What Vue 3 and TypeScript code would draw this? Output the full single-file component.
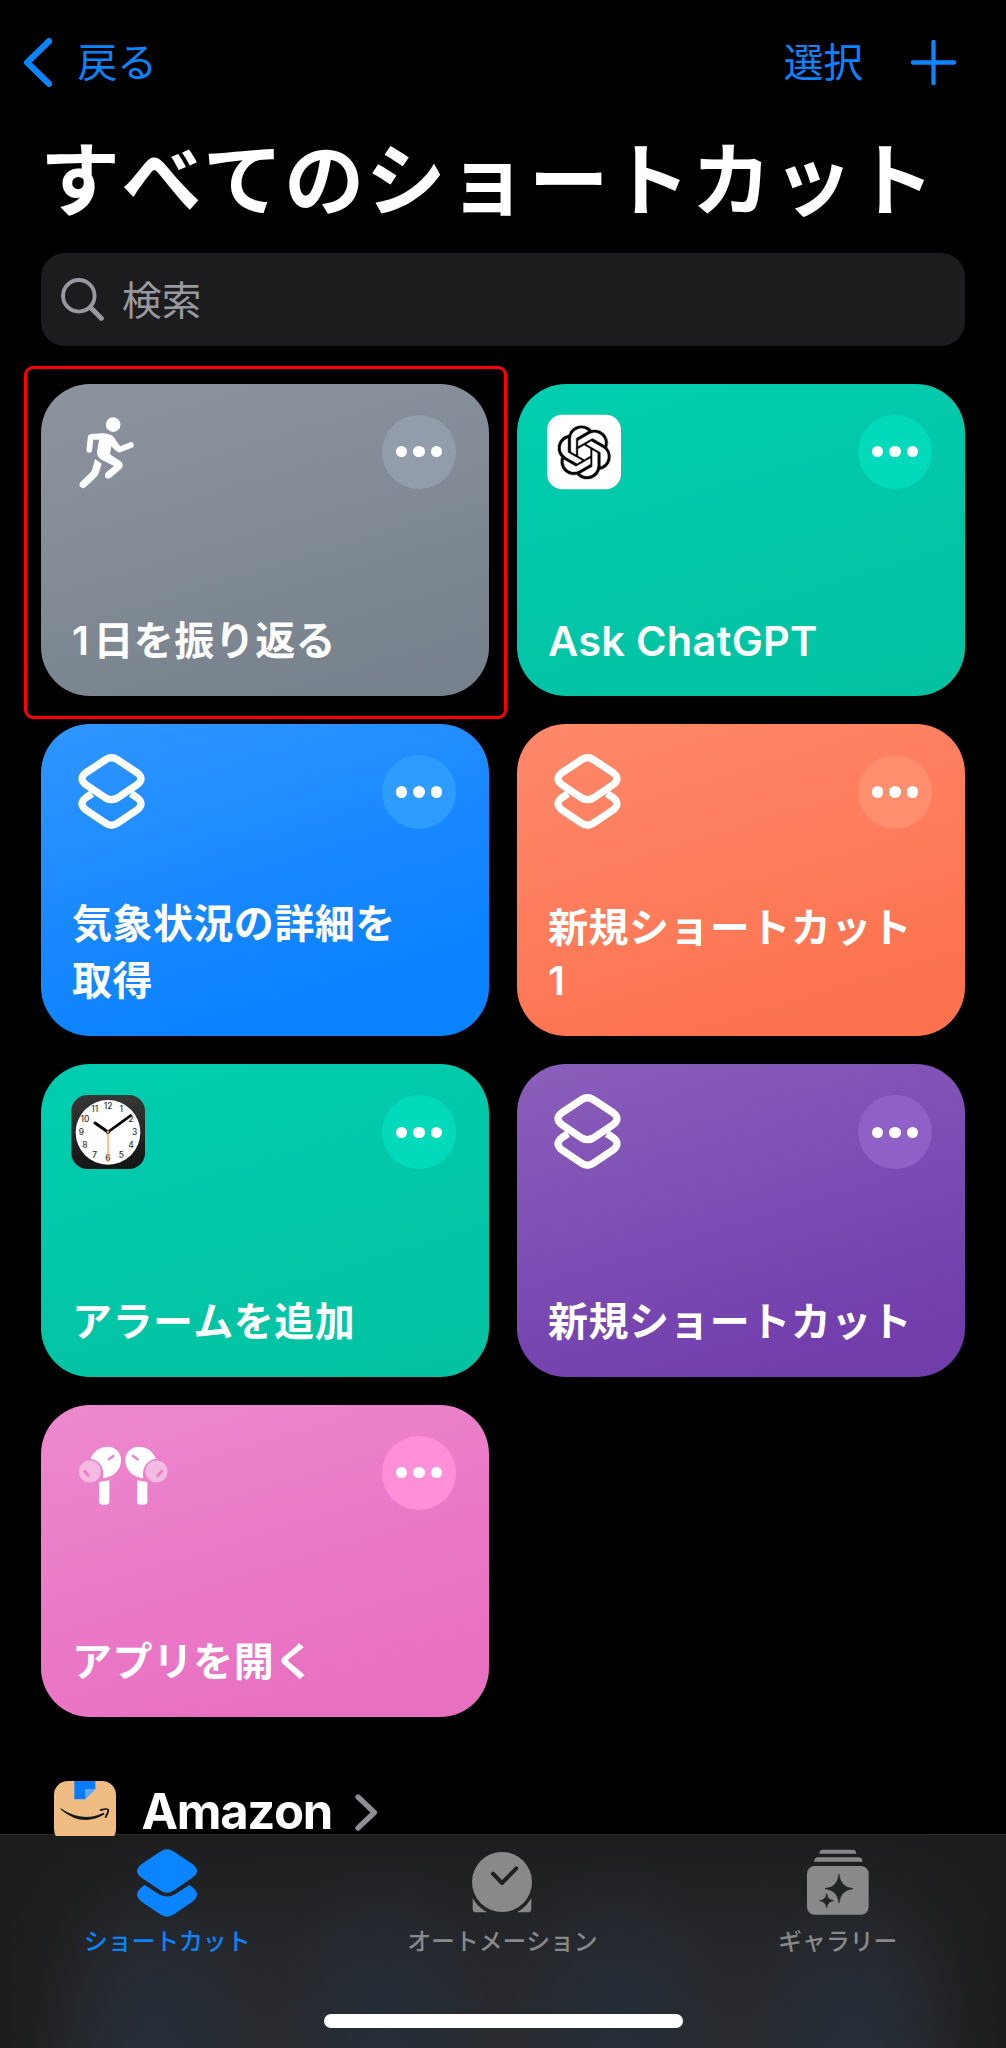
<script setup lang="ts">
type IconKind = 'runner' | 'chatgpt' | 'layers' | 'clock' | 'buds'

interface Shortcut {
  lines: string[]
  icon: IconKind
  tone: string
  variant?: string
}

const shortcuts: Shortcut[] = [
  { lines: ['1日を振り返る'], icon: 'runner', tone: 'gray', variant: 'highlighted' },
  { lines: ['Ask ChatGPT'], icon: 'chatgpt', tone: 'green', variant: 'latin' },
  { lines: ['気象状況の詳細を', '取得'], icon: 'layers', tone: 'blue' },
  { lines: ['新規ショートカット', '1'], icon: 'layers', tone: 'orange', variant: 'tight' },
  { lines: ['アラームを追加'], icon: 'clock', tone: 'green' },
  { lines: ['新規ショートカット'], icon: 'layers', tone: 'purple' },
  { lines: ['アプリを開く'], icon: 'buds', tone: 'pink' },
]

const numerals = Array.from({ length: 12 }, (_, i) => {
  const hour = i + 1
  const angle = (hour * Math.PI) / 6
  return {
    hour,
    x: 236 + Math.sin(angle) * 80,
    y: 231 - Math.cos(angle) * 79 + 9,
  }
})
</script>

<template>
  <div class="screen">
    <header class="nav">
      <button class="back">
        <svg class="chevron" viewBox="72 111 84 147" fill="none">
          <path d="M147 120.500L81.500 184.500L147 248.500" stroke="currentColor" stroke-width="19" stroke-linecap="round" stroke-linejoin="round" />
        </svg>
        <span>戻る</span>
      </button>
      <div class="actions">
        <button class="select">選択</button>
        <svg class="plus" viewBox="0 0 134 134">
          <path d="M67 6V128M6 67H128" stroke="currentColor" stroke-width="13" stroke-linecap="round" />
        </svg>
      </div>
    </header>

    <h1 class="title">すべてのショートカット</h1>

    <div class="search">
      <svg viewBox="183 833 128 128" fill="none">
        <circle cx="236" cy="886" r="47" stroke="currentColor" stroke-width="11.500" />
        <path d="M271 921L303 953" stroke="currentColor" stroke-width="15" stroke-linecap="round" />
      </svg>
      <span>検索</span>
    </div>

    <main class="grid">
      <article v-for="(item, i) in shortcuts" :key="i" class="card" :class="[item.tone, item.variant]">
        <div class="card-top">
          <svg v-if="item.icon === 'runner'" class="icon" viewBox="154 163 222 222">
            <g fill="none" stroke="#fff" stroke-linecap="round" stroke-linejoin="round">
              <path d="M209 268L213 229L250 228" stroke-width="17" />
              <path d="M276 239L299 267L334 253" stroke-width="17" />
            </g>
            <circle cx="280.500" cy="192" r="22" fill="#fff" />
            <path d="M213 220L250 218Q273 219 284 231L300 258L290 272L275 257L271 281L303 302Q315 313 304 325L273 351Q263 357 256 349Q253 341 260 335L283 316L246 297Q231 288 232 273L238 238Z" fill="#fff" />
            <path d="M226 295L246 309L237 338Q234 346 227 352L198 379Q190 386 182 379Q176 372 183 364L211 337Q217 331 218 326Z" fill="#fff" />
          </svg>

          <svg v-else-if="item.icon === 'chatgpt'" class="icon" viewBox="0 0 222 222">
            <rect y="-1" width="222" height="224" rx="46" fill="#fff" />
            <g transform="translate(30 30.500) scale(6.800)">
              <path fill="#000" stroke="#fff" stroke-width="0.25" d="M22.2819 9.8211a5.9847 5.9847 0 0 0-.5157-4.9108 6.0462 6.0462 0 0 0-6.5098-2.9A6.0651 6.0651 0 0 0 4.9807 4.1818a5.9847 5.9847 0 0 0-3.9977 2.9 6.0462 6.0462 0 0 0 .7427 7.0966 5.98 5.98 0 0 0 .511 4.9107 6.051 6.051 0 0 0 6.5146 2.9001A5.9847 5.9847 0 0 0 13.2599 24a6.0557 6.0557 0 0 0 5.7718-4.2058 5.9894 5.9894 0 0 0 3.9977-2.9001 6.0557 6.0557 0 0 0-.7475-7.073zm-9.022 12.6081a4.4755 4.4755 0 0 1-2.8764-1.0408l.1419-.0804 4.7783-2.7582a.7948.7948 0 0 0 .3927-.6813v-6.7369l2.02 1.1686a.071.071 0 0 1 .038.052v5.5826a4.504 4.504 0 0 1-4.4945 4.4944zm-9.6607-4.1254a4.4708 4.4708 0 0 1-.5346-3.0137l.142.0852 4.783 2.7582a.7712.7712 0 0 0 .7806 0l5.8428-3.3685v2.3324a.0804.0804 0 0 1-.0332.0615L9.74 19.9502a4.4992 4.4992 0 0 1-6.1408-1.6464zM2.3408 7.8956a4.485 4.485 0 0 1 2.3655-1.9728V11.6a.7664.7664 0 0 0 .3879.6765l5.8144 3.3543-2.0201 1.1685a.0757.0757 0 0 1-.071 0l-4.8303-2.7865A4.504 4.504 0 0 1 2.3408 7.872zm16.5963 3.8558L13.1038 8.364 15.1192 7.2a.0757.0757 0 0 1 .071 0l4.8303 2.7913a4.4944 4.4944 0 0 1-.6765 8.1042v-5.6772a.79.79 0 0 0-.407-.667zm2.0107-3.0231l-.142-.0852-4.7735-2.7818a.7759.7759 0 0 0-.7854 0L9.409 9.2297V6.8974a.0662.0662 0 0 1 .0284-.0615l4.8303-2.7866a4.4992 4.4992 0 0 1 6.6802 4.66zM8.3065 12.863l-2.02-1.1638a.0804.0804 0 0 1-.038-.0567V6.0742a4.4992 4.4992 0 0 1 7.3757-3.4537l-.142.0805L8.704 5.459a.7948.7948 0 0 0-.3927.6813zm1.0976-2.3654l2.602-1.4998 2.6069 1.4998v2.9994l-2.5974 1.4997-2.6067-1.4997Z" />
            </g>
          </svg>

          <svg v-else-if="item.icon === 'layers'" class="icon" viewBox="125 120 222 222" fill="none" stroke="#fff" stroke-width="22" stroke-linecap="round" stroke-linejoin="round">
            <path d="M229 134Q246.500 123 264 134L323 173Q347 191 323 209L264 249Q246.500 259 229 249L170 209Q146 191 170 173Z" />
            <path d="M188 236L170 248Q146 266 170 285L229 325Q246.500 337 264 325L323 285Q347 266 323 248L305 236" stroke-linecap="butt" />
          </svg>

          <svg v-else-if="item.icon === 'clock'" class="icon" viewBox="125 120 222 222">
            <defs>
              <linearGradient id="clock-case" x1="0" y1="0" x2="0" y2="1">
                <stop offset="0" stop-color="#373737" />
                <stop offset="1" stop-color="#141414" />
              </linearGradient>
            </defs>
            <rect x="126" y="120" width="221" height="222" rx="48" fill="url(#clock-case)" />
            <circle cx="236" cy="232" r="97" fill="#fff" />
            <text v-for="n in numerals" :key="n.hour" :x="n.x" :y="n.y" class="numeral">{{ n.hour }}</text>
            <g stroke-linecap="round" fill="none">
              <path d="M236 231L197 204" stroke="#000" stroke-width="9" />
              <path d="M236 231L304 182" stroke="#000" stroke-width="8" />
              <path d="M236 226V320" stroke="#ff9a3c" stroke-width="3.500" />
            </g>
            <circle cx="236" cy="231" r="6" fill="#222" />
            <circle cx="236" cy="231" r="3.500" fill="#ff9a3c" />
          </svg>

          <svg v-else class="icon" viewBox="125 121 222 222">
            <g v-for="side in 2" :key="side" :transform="side === 2 ? 'translate(563 0) scale(-1 1)' : undefined">
              <path d="M183 189Q200 153 235 153C258 153 275 170 275 193C275 223 254 243 221 248C226 215 211 193 183 189Z" fill="#fff" />
              <path d="M238 191L252 181" stroke="#ea80ca" stroke-width="7" stroke-linecap="round" />
              <circle cx="181.500" cy="227.500" r="33" fill="#f4bbe2" />
              <path d="M166 227L177 240" stroke="#ea80ca" stroke-width="9" stroke-linecap="round" />
              <path d="M209 259L240 254V317Q240 327 230 327H219Q209 327 209 317Z" fill="#fff" />
            </g>
          </svg>

          <button class="more" aria-label="詳細"><i></i><i></i><i></i></button>
        </div>
        <h2 class="name"><span v-for="line in item.lines" :key="line">{{ line }}</span></h2>
      </article>
    </main>

    <section class="app-row">
      <svg class="amazon" viewBox="161 123 186 165">
        <defs>
          <clipPath id="tile"><rect x="161" y="123" width="186" height="186" rx="42" /></clipPath>
        </defs>
        <g clip-path="url(#tile)">
          <rect x="161" y="123" width="186" height="186" fill="#efbc83" />
          <path d="M222 123H285V147L254 178H222Z" fill="#0a7aff" />
          <path d="M254 147H285L254 178Z" fill="#5ea8fb" />
          <path d="M181 205Q246 249 310 218L313 223Q246 263 182 209Q179 205 181 205Z" fill="#141a20" />
          <path d="M301 210Q321 205 323 209Q325 215 316 231" fill="none" stroke="#141a20" stroke-width="5.500" stroke-linecap="round" />
        </g>
      </svg>
      <span class="app-name">Amazon</span>
      <svg class="disclosure" viewBox="1065 162 68 111" fill="none">
        <path d="M1074 171L1123 217.500L1074 264" stroke="#8e8e93" stroke-width="16" stroke-linecap="round" stroke-linejoin="round" />
      </svg>
    </section>

    <footer class="tabbar">
      <nav class="tabs">
        <div class="tab active">
          <svg width="60" height="68" viewBox="411 327 180 204" fill="currentColor">
            <path d="M480 335Q501 321 522 335L577 372Q605 393 577 413L522 451Q501 466 480 451L425 413Q397 393 425 372Z" />
            <path d="M434 435L477 463Q501 476 525 463L568 435L577 442Q605 464 577 485L522 523Q501 537 480 523L425 485Q397 464 425 442Z" />
          </svg>
          <span>ショートカット</span>
        </div>
        <div class="tab">
          <svg width="60" height="64" viewBox="0 -9 180 192" fill="currentColor">
            <circle cx="90" cy="90" r="90" />
            <path d="M63 65L90 93L133 49" fill="none" stroke="#202021" stroke-width="12" stroke-linecap="round" stroke-linejoin="round" />
            <path d="M2 138V170Q2 181 13 181H46Q17 166 2 138Z" />
            <path d="M178 138V170Q178 181 167 181H134Q163 166 178 138Z" />
          </svg>
          <span>オートメーション</span>
        </div>
        <div class="tab">
          <svg width="62" height="66" viewBox="911 329 186 198" fill="currentColor">
            <path d="M948 343Q949 331 958 331H1049Q1058 331 1059 343Z" />
            <path d="M932 367Q934 354 944 354H1066Q1076 354 1078 367Z" />
            <rect x="911" y="380" width="185" height="146" rx="23" />
            <path d="M1007 405Q1011 444 1049 448Q1011 452 1007 491Q1003 452 965 448Q1003 444 1007 405Z" fill="#222325" stroke="#222325" stroke-width="2" />
            <path d="M970 463Q973 482 991 484Q973 486 970 505Q967 486 949 484Q967 482 970 463Z" fill="#222325" stroke="#222325" stroke-width="2" />
          </svg>
          <span>ギャラリー</span>
        </div>
      </nav>
      <div class="home-indicator"></div>
    </footer>
  </div>
</template>

<style>
body {
  background: #000;
}
</style>

<style scoped>
.screen {
  width: 1006px;
  height: 2048px;
  box-sizing: border-box;
  display: flex;
  flex-direction: column;
  overflow: hidden;
  background: #000;
  color: #fff;
  font-family: "Inter", "Noto Sans CJK JP", sans-serif;
  font-kerning: none;
}

svg {
  display: block;
  flex: none;
}

button {
  padding: 0;
  border: 0;
  background: none;
  color: inherit;
  font: inherit;
}

.nav {
  display: flex;
  align-items: center;
  justify-content: space-between;
  height: 124px;
  padding: 0 50px 0 24px;
  color: #0a84ff;
  font-size: 39.700px;
  line-height: 58px;
}

.nav span,
.select {
  padding-top: 2px;
}

.back,
.actions {
  display: flex;
  align-items: center;
}

.back {
  gap: 25.500px;
}

.chevron {
  width: 28px;
  height: 49px;
}

.actions {
  gap: 48px;
}

.plus {
  width: 45px;
  height: 45px;
}

.title {
  height: 129px;
  margin: 0;
  padding-left: 40px;
  font-size: 80px;
  font-weight: 700;
  letter-spacing: 1.450px;
  line-height: 111px;
  white-space: nowrap;
}

.search {
  display: flex;
  align-items: center;
  gap: 18px;
  width: 924px;
  height: 92.500px;
  margin-left: 41px;
  padding-left: 20px;
  box-sizing: border-box;
  border-radius: 24px;
  background: #1c1c1e;
  color: #98989f;
  font-size: 39.700px;
}

.search svg {
  width: 43px;
  height: 43px;
}

.search span {
  margin-top: -3px;
}

.grid {
  display: grid;
  grid-template-columns: 448px 448px;
  grid-auto-rows: 312.400px;
  gap: 28px;
  margin: 38px 0 0 41px;
}

.card {
  position: relative;
  display: flex;
  flex-direction: column;
  justify-content: space-between;
  box-sizing: border-box;
  padding: 31px 33px 26.400px 31px;
  border-radius: 49px;
}

.gray { --more: #939caa; background: linear-gradient(163deg, #8d939e, #828b96 45%, #74808b); }
.green { --more: #02dabb; background: linear-gradient(163deg, #00ceb0, #02c7a9 45%, #03c2a1); }
.blue { --more: #2e9bff; background: linear-gradient(163deg, #3096ff, #1787ff 52%, #0b82ff 80%); }
.orange { --more: #ff8e6f; background: linear-gradient(163deg, #ff886b, #fd7b5a 52%, #fc724f 85%); }
.purple { --more: #8f60c5; background: linear-gradient(163deg, #8b5fbb, #7d4db4 45%, #703dab 88%); }
.pink { --more: #ff8fd9; background: linear-gradient(163deg, #ed89ce, #ea79c7 50%, #e870c1 85%); }

.highlighted::after {
  content: "";
  position: absolute;
  inset: -18px -18px -23px -17px;
  border: 3px solid #f00;
  border-radius: 9px;
}

.card-top {
  display: flex;
  justify-content: space-between;
}

.icon {
  width: 74px;
  height: 74px;
  margin-left: -1px;
  overflow: visible;
}

.more {
  display: flex;
  align-items: center;
  justify-content: center;
  gap: 6px;
  width: 74px;
  height: 74px;
  border-radius: 50%;
  background: var(--more);
}

.more i {
  width: 11.500px;
  height: 11.500px;
  border-radius: 50%;
  background: #fff;
}

.name {
  margin: 0;
  font-size: 40px;
  font-weight: 600;
  letter-spacing: 0.450px;
  line-height: 56.700px;
  white-space: nowrap;
}

.name span {
  display: block;
}

.highlighted .name span::first-letter {
  margin-right: 4px;
}

.latin .name {
  font-size: 41.500px;
  letter-spacing: 0.300px;
  font-kerning: normal;
}

.tight .name {
  line-height: 52.700px;
  padding-bottom: 2px;
}

.numeral {
  font-family: "Inter", sans-serif;
  font-size: 25px;
  font-weight: 500;
  fill: #333;
  text-anchor: middle;
}

.app-row {
  display: flex;
  align-items: flex-start;
  height: 53px;
  margin-top: 64px;
  padding-left: 53.500px;
}

.amazon {
  position: relative;
  z-index: 1;
  width: 62px;
  height: 55px;
}

.app-name {
  width: 213.500px;
  margin-left: 26px;
  font-size: 49px;
  font-weight: 700;
  letter-spacing: -1.300px;
  line-height: 62px;
}

.disclosure {
  width: 22.700px;
  height: 37px;
  margin-top: 13px;
}

.tabbar {
  display: flex;
  flex: 1;
  flex-direction: column;
  align-items: center;
  border-top: 1px solid #2b2b2c;
  background:
    radial-gradient(ellipse 115px 150px at 155px 200px, #252f3bcc, #252f3b00),
    radial-gradient(ellipse 115px 170px at 385px 190px, #252f3bcc, #252f3b00),
    radial-gradient(ellipse 115px 170px at 617px 190px, #252f3bcc, #252f3b00),
    radial-gradient(ellipse 115px 150px at 853px 200px, #252f3bcc, #252f3b00),
    linear-gradient(90deg, #1c1c1c, #1c1c1c00 13%, #1c1c1c00 87%, #1c1c1c),
    linear-gradient(#1d1d1e, #242528 45%, #292b2f);
}

.tabs {
  display: flex;
  width: 100%;
  height: 179px;
}

.tab {
  display: flex;
  flex: 1;
  flex-direction: column;
  align-items: center;
  color: #89898b;
  font-size: 23.800px;
  font-weight: 500;
  line-height: 36px;
}

.tab svg {
  margin-top: 14px;
  margin-left: -1px;
}

.tab span {
  margin-top: auto;
  margin-bottom: 54px;
  margin-left: -1px;
}

.active {
  color: #0a84ff;
}

.home-indicator {
  width: 359px;
  height: 14px;
  border-radius: 7px;
  background: #fff;
}
</style>
